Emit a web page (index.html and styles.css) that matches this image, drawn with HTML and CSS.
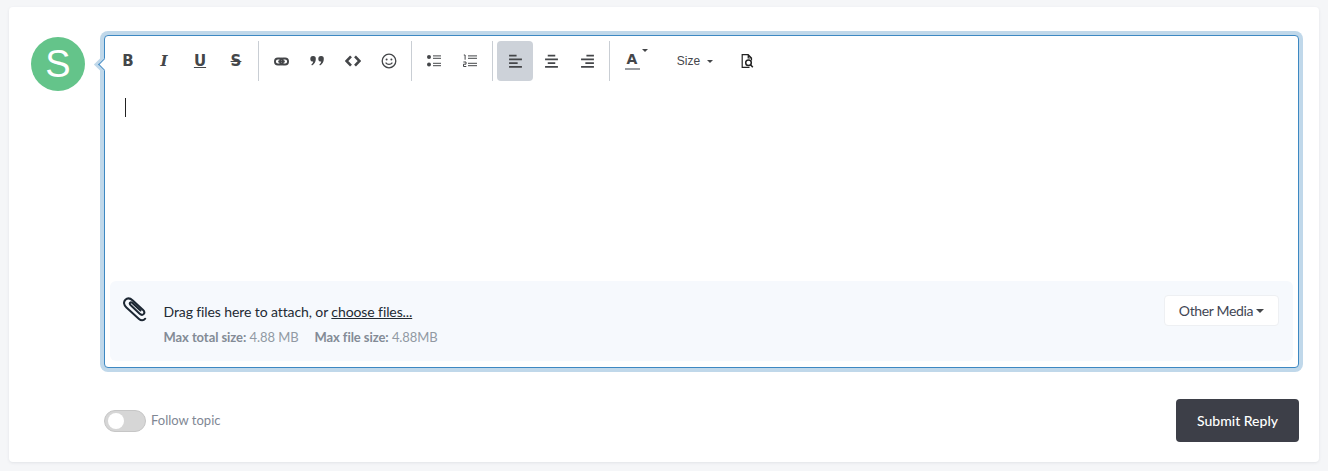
FILE: index.html
```html
<!DOCTYPE html>
<html lang="en">
<head>
<meta charset="utf-8">
<title>Reply</title>
<link rel="stylesheet" href="styles.css">
</head>
<body>
<main class="card">
  <div class="compose">
    <div class="avatar">S</div>
    <div class="editor">
      <span class="pointer"></span>
      <div class="toolbar">
        <button class="tool glyph">B</button>
        <button class="tool glyph italic">I</button>
        <button class="tool glyph under">U</button>
        <button class="tool glyph strike">S</button>
        <span class="sep"></span>
        <button class="tool"><svg class="ic" viewBox="0 0 16 16"><rect x="1" y="4.800" width="8.600" height="6.400" rx="3.200" class="st"/><rect x="6.400" y="4.800" width="8.600" height="6.400" rx="3.200" class="st"/><path d="M4.500 8h7" class="st"/></svg></button>
        <button class="tool"><svg class="ic big" viewBox="0 0 16 16"><path class="fl" d="M4 3a2.700 2.700 0 0 1 2.800 2.900c0 2.800-1.300 5-3.800 6.600l-.7-.9c1-.8 1.700-1.700 1.900-3A2.800 2.800 0 0 1 4 3zM12 3a2.700 2.700 0 0 1 2.800 2.900c0 2.800-1.300 5-3.800 6.600l-.7-.9c1-.8 1.700-1.700 1.900-3A2.800 2.800 0 0 1 12 3z"/></svg></button>
        <button class="tool"><svg class="ic big" viewBox="0 0 16 16"><path d="M6 3.300 1.500 8 6 12.700M10 3.300 14.500 8 10 12.700" class="st thick"/></svg></button>
        <button class="tool"><svg class="ic big" viewBox="0 0 16 16"><circle cx="8" cy="8" r="6.800" class="st thin"/><circle cx="5.600" cy="6.400" r="1" class="fl"/><circle cx="10.400" cy="6.400" r="1" class="fl"/><path d="M4.600 9.600c1.800 2.400 5 2.400 6.800 0" class="st thin"/></svg></button>
        <span class="sep"></span>
        <button class="tool"><svg class="ic list" viewBox="0 0 14 14"><circle cx="2" cy="3" r="2" class="fl"/><circle cx="2" cy="10.500" r="2" class="fl"/><path d="M6 1.900h8M6 4.300h8M6 9.300h8M6 11.700h8" class="st hair"/></svg></button>
        <button class="tool"><svg class="ic list" viewBox="0 0 14 14"><path d="M.8 1h1.300v4.700M.4 8h2.600v2.200H.5v2.300h2.800" class="st hair"/><path d="M5 1.900h9M5 4.300h9M5 9.300h9M5 11.700h9" class="st hair"/></svg></button>
        <span class="sep"></span>
        <button class="tool active"><svg class="ic" viewBox="0 0 14 14"><path d="M1 1.500h7M1 5h12M1 8.500h8M1 12h12" class="st bar"/></svg></button>
        <button class="tool"><svg class="ic" viewBox="0 0 14 14"><path d="M3.500 1.500h7M1 5h12M3.500 8.500h7M1 12h12" class="st bar"/></svg></button>
        <button class="tool"><svg class="ic" viewBox="0 0 14 14"><path d="M6 1.500h7M1 5h12M5 8.500h8M1 12h12" class="st bar"/></svg></button>
        <span class="sep"></span>
        <button class="tool color"><span class="color-a">A</span><span class="color-caret"></span></button>
        <button class="tool size">Size<span class="size-caret"></span></button>
        <button class="tool"><svg class="ic doc-ic" viewBox="0 0 13 14"><path d="M8.500 13.400H1.200V.7h6l3.300 3.300v2.500M7.200.7v3.300h3.300" class="st doc"/><circle cx="7.500" cy="8.800" r="2.800" class="st doc2"/><path d="m9.500 10.800 2.300 2.500" class="st doc2"/></svg></button>
      </div>
      <div class="write"><span class="cursor"></span></div>
      <div class="attach">
        <svg class="clip" viewBox="0 0 24 26"><path d="M22.200 21.700c-1.700 2.100-4.300 2-6.200.3L3.400 10.600C.6 8 .3 4.800 2.400 2.700 4.600.6 7.300 1.200 9.800 3.500l10.300 9.600c1.300 1.200 1.600 2.800.5 4-1.100 1.100-2.600.8-3.900-.4L7.500 8c-.8-.8-.9-1.700-.4-2.300.6-.6 1.500-.4 2.300.3l8.100 7.500" class="clip-path"/></svg>
        <div class="attach-text">
          <p class="drag">Drag files here to attach, or <a class="choose" href="#">choose files...</a></p>
          <p class="limits"><span><b>Max total size:</b> 4.88 MB</span><span><b>Max file size:</b> 4.88MB</span></p>
        </div>
        <button class="media">Other Media<span class="media-caret"></span></button>
      </div>
    </div>
  </div>
  <div class="actions">
    <label class="follow"><span class="switch"><span class="knob"></span></span><span class="follow-text">Follow topic</span></label>
    <button class="submit">Submit Reply</button>
  </div>
</main>
</body>
</html>
```
FILE: styles.css
```css
* { box-sizing: border-box; }
html, body { height: 100%; }
body {
  margin: 0;
  padding: 7px 9px 9px;
  background: #f5f6f8;
  font-family: "Lato", sans-serif;
  color: #353c41;
  overflow: hidden;
}
button { font: inherit; border: 0; background: none; padding: 0; color: inherit; }
p { margin: 0; }

.card {
  width: 1310px;
  height: 455px;
  background: #fff;
  border-radius: 4px;
  padding: 28px 20px 20px 22px;
  box-shadow: 0 1px 3px rgba(60, 70, 90, .10);
}
.compose { display: flex; align-items: flex-start; }
.avatar {
  width: 54px;
  height: 54px;
  margin-top: 2px;
  margin-right: 19px;
  border-radius: 50%;
  background: #64c48a;
  color: #fff;
  font: 38px/54px "Liberation Sans", sans-serif;
  text-align: center;
  flex: none;
}
.editor {
  position: relative;
  width: 1195px;
  height: 333px;
  border: 1px solid #3d88c2;
  border-radius: 4px;
  box-shadow: 0 0 0 4px #c0d8ea;
  background: #fff;
  padding: 5px 5px 6px;
  display: flex;
  flex-direction: column;
}
.pointer {
  position: absolute;
  left: -5.500px;
  top: 23.500px;
  width: 9px;
  height: 9px;
  background: #fff;
  border-left: 1px solid #3d88c2;
  border-bottom: 1px solid #3d88c2;
  transform: rotate(45deg);
  box-shadow: -3px 3px 0 0 #c0d8ea;
}
.toolbar { display: flex; align-items: center; height: 40px; }
.tool {
  width: 36px;
  height: 40px;
  flex: none;
  display: flex;
  align-items: center;
  justify-content: center;
  border-radius: 4px;
  color: #444649;
}
.tool.active { background: #cdd2d9; }
.glyph { font: 700 15px/1 "DejaVu Sans", sans-serif; }
.italic { font-family: "DejaVu Serif", serif; font-style: italic; }
.under { text-decoration: underline; }
.strike { text-decoration: line-through; }
.sep { width: 1px; height: 40px; background: #c9ced4; margin: 0 4px; flex: none; }
.ic { width: 15px; height: 15px; display: block; }
.ic.big { width: 16px; height: 16px; }
.ic.list { width: 14px; height: 14px; }
.ic.doc-ic { width: 13px; height: 14px; }
.st { fill: none; stroke: #444649; stroke-width: 2; }
.thick { stroke-width: 2.600; }
.thin { stroke-width: 1.300; }
.hair { stroke-width: 1; }
.bar { stroke-width: 1.600; }
.doc { stroke: #222; stroke-width: 1.200; }
.doc2 { stroke: #222; stroke-width: 1.500; }
.fl { fill: #444649; }
.color { position: relative; }
.color-a {
  font: 700 14px/15px "DejaVu Sans", sans-serif;
  padding-bottom: 1px;
  width: 15px;
  text-align: center;
  border-bottom: 2px solid #9a9da1;
}
.color-caret {
  position: absolute;
  right: 2px;
  top: 8px;
  border: 3px solid transparent;
  border-top: 3px solid #444649;
  border-bottom: 0;
}
.size {
  width: 68px;
  margin-left: 11px;
  font: 12px "Liberation Sans", sans-serif;
  color: #45474c;
}
.size-caret {
  margin-left: 7px;
  border: 3px solid transparent;
  border-top: 3px solid #444649;
  border-bottom: 0;
}
.write { flex: 1; padding: 17px 15px; }
.cursor { display: block; width: 1px; height: 19px; background: #222; }
.attach {
  height: 80px;
  background: #f6f9fd;
  border-radius: 6px;
  padding: 14px 14px 0 13px;
  display: flex;
  align-items: flex-start;
}
.clip { width: 24px; height: 26px; margin-top: 2px; flex: none; }
.clip-path { fill: none; stroke: #1c2733; stroke-width: 2; stroke-linecap: round; }
.attach-text { margin-left: 16.500px; flex: 1; padding-top: 6px; }
.drag { font-size: 14px; line-height: 21px; color: #232a33; letter-spacing: -.1px; }
.choose { color: #232a33; text-decoration: underline; }
.limits { font-size: 13px; line-height: 20px; margin-top: 5px; color: #9199a3; display: flex; gap: 16px; letter-spacing: -.07px; }
.limits b { color: #838b96; }
.media {
  width: 115px;
  height: 31px;
  background: #fff;
  border: 1px solid #eef0f3;
  border-radius: 4px;
  font-size: 14px;
  letter-spacing: -.35px;
  color: #3f4654;
  display: flex;
  align-items: center;
  justify-content: center;
}
.media-caret {
  margin-left: 3px;
  border: 4px solid transparent;
  border-top: 4px solid #444649;
  border-bottom: 0;
}
.actions {
  display: flex;
  align-items: center;
  justify-content: space-between;
  margin: 31px 0 0 73px;
  width: 1195px;
}
.follow { display: flex; align-items: center; gap: 5px; font-size: 13px; color: #7f8794; }
.follow-text { padding-bottom: 1px; }
.switch {
  width: 42px;
  height: 22px;
  border-radius: 11px;
  background: #d6d6d6;
  border: 1px solid #c6c6c6;
  padding: 2px 3px;
  display: block;
}
.knob { display: block; width: 16px; height: 16px; border-radius: 50%; background: #fff; }
.submit {
  width: 123px;
  height: 43px;
  background: #3d3f48;
  color: #fff;
  border-radius: 4px;
  font-size: 14px;
  font-weight: 500;
}
```
